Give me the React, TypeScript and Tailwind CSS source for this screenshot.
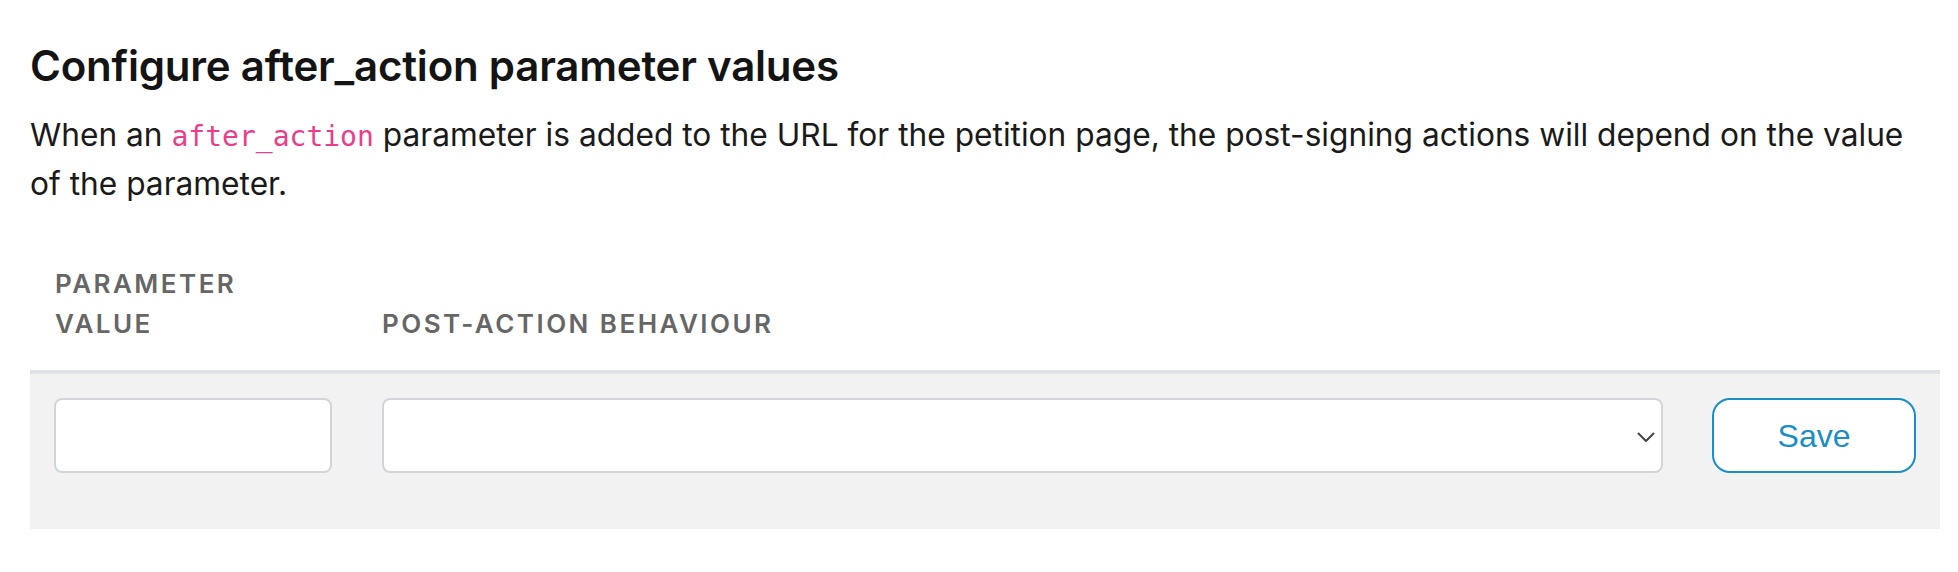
import React from "react";

export default function App() {
  const sans = { fontFamily: "Inter, 'Liberation Sans', sans-serif" };
  return (
    <div
      className="w-[1958px] h-[572px] bg-white pl-[30px] pr-[18px] pt-[42px] text-[#161616]"
      style={sans}
    >
      <h2 className="text-[42px] leading-[48px] font-semibold tracking-[-0.005em] text-[#141414]">
        Configure after_action parameter values
      </h2>
      <p className="mt-[20px] text-[31.7px] leading-[49px] text-[#1a1a1a]">
        When an{" "}
        <code
          className="text-[28px] leading-none text-[#e83e8c]"
          style={{ fontFamily: "'DejaVu Sans Mono', monospace" }}
        >
          after_action
        </code>{" "}
        parameter is added to the URL for the petition page, the post-signing actions will depend on the value
        <br />
        of the parameter.
      </p>

      <div className="mt-[56px] flex items-end px-[24px] pb-[26px] text-[26px] leading-[40px] font-semibold uppercase tracking-[0.095em] text-[#666666]">
        <div className="w-[278px] pl-[1px]">
          Parameter
          <br />
          Value
        </div>
        <div className="ml-[50px]">Post-action behaviour</div>
      </div>

      <div className="border-t-4 border-[#dee1e5] bg-[#f2f2f2] pt-[24px] pb-[56px] px-[24px] flex items-center">
        <input
          type="text"
          className="w-[278px] h-[75px] rounded-[8px] border-2 border-[#d1d5db] bg-white outline-none"
        />
        <div className="relative ml-[50px] flex-1 h-[75px] rounded-[8px] border-2 border-[#d1d5db] bg-white">
          <svg
            className="absolute right-[6px] top-[32px]"
            width="18"
            height="11"
            viewBox="0 0 18 11"
            fill="none"
          >
            <polyline
              points="1.5,1.5 9,9 16.5,1.5"
              stroke="#444"
              strokeWidth="2"
              strokeLinecap="round"
              strokeLinejoin="round"
            />
          </svg>
        </div>
        <button
          className="ml-[49px] w-[204px] h-[75px] rounded-[18px] border-2 border-[#1a8ec5] bg-white text-[32px] text-[#1a8ec5]"
          style={{ fontFamily: "'Liberation Sans', Arial, sans-serif" }}
        >
          Save
        </button>
      </div>
    </div>
  );
}
